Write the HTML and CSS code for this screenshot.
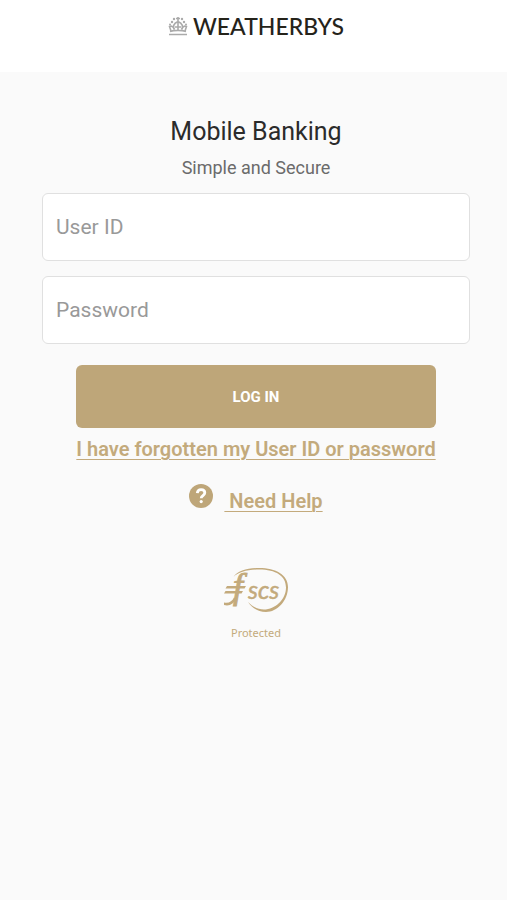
FILE: index.html
```html
<!DOCTYPE html>
<html lang="en">
<head>
  <meta charset="UTF-8" />
  <meta name="viewport" content="width=device-width, initial-scale=1" />
  <title>Weatherbys Mobile Banking</title>
  <link rel="stylesheet" href="styles.css">
</head>
<body>

  <header class="topbar">
    <svg class="crest" viewBox="0 0 20 20" aria-hidden="true">
      <path d="M1 18.500h18M2 15.500c4-1.500 12-1.500 16 0M3 15l-1.500-4.500c2-1 4 0 4.500 2.500M17 15l1.500-4.500c-2-1-4 0-4.500 2.500M10 14V5M6.500 13.500c-2-3-1-6 3.500-8 4.500 2 5.500 5 3.500 8M7 11h6M8 2.500h4M10 1v4" />
      <circle cx="4" cy="6" r="1.200" />
      <circle cx="16" cy="6" r="1.200" />
      <circle cx="6" cy="3" r="1.200" />
      <circle cx="14" cy="3" r="1.200" />
      <circle cx="2" cy="8.500" r="1" />
      <circle cx="18" cy="8.500" r="1" />
    </svg>
    <span class="brand">WEATHERBYS</span>
  </header>

  <main class="login">
    <h1>Mobile Banking</h1>
    <p class="tagline">Simple and Secure</p>

    <form class="login-form">
      <input type="text" id="userId" placeholder="User ID" aria-label="User ID" />
      <input type="password" id="password" placeholder="Password" aria-label="Password" />
      <button type="submit">LOG IN</button>
    </form>

    <a class="link" href="#">I have forgotten my User ID or password</a>

    <div class="help">
      <svg class="help-icon" viewBox="0 0 24 24" aria-hidden="true">
        <circle cx="12" cy="12" r="12" />
        <path d="M8.300 9.200c.2-2.300 1.700-3.500 3.800-3.500 2.200 0 3.700 1.200 3.700 3.100 0 2.700-3.600 2.800-3.600 5.400" />
        <circle class="dot" cx="12.200" cy="17.600" r="1.600" />
      </svg>
      <a class="link" href="#">&nbsp;Need Help</a>
    </div>

    <div class="fscs">
      <svg class="fscs-logo" viewBox="0 0 64 45" role="img" aria-label="FSCS">
        <path d="M9.500 9C13 3 24 0 35 0c17 0 29 7 29 19 0 14-11 25-22 25-8 0-14-4-18-10 5 5 10 7.500 16 7.500 11 0 22-10 22-22C62 8 52 1.500 35 1.500 24 1.500 14 4 9.500 9z" />
        <path d="M3 18h19l-1.500 2.500H1.500zM1.500 23h17.500l-1.500 2.500H0z" />
        <path d="M0 34.500c5 1 8-1 10-5l2 1c-2 5-6 8-12 6.500z" />
        <text class="fscs-f" x="9" y="30">f</text>
        <text class="fscs-scs" x="24" y="31">scs</text>
      </svg>
      <span class="fscs-label">Protected</span>
    </div>
  </main>

</body>
</html>
```

FILE: styles.css
```css
* {
  box-sizing: border-box;
}

body {
  background: #fafafa;
  color: #2b2b2b;
  font-family: Roboto, sans-serif;
  margin: 0;
}

.topbar {
  display: flex;
  justify-content: center;
  align-items: center;
  gap: 5px;
  padding: 14px 0 34px 5px;
  background: #fff;
}

.crest {
  width: 20px;
  height: 20px;
  fill: #aaa;
}

.crest path {
  fill: none;
  stroke: #aaa;
  stroke-width: 1.6;
}

.brand {
  color: #25231a;
  font-family: Lato, sans-serif;
  font-size: 23px;
  font-weight: 500;
  line-height: 24px;
}

.login {
  display: flex;
  flex-direction: column;
  align-items: center;
  padding: 44px 37px 32px 42px;
}

h1 {
  margin: 0;
  font-size: 25px;
  font-weight: 400;
  line-height: 32px;
}

.tagline {
  margin: 8px 0 13px;
  color: #6b6b6b;
  font-size: 18px;
  line-height: 24px;
}

.login-form {
  display: flex;
  flex-direction: column;
  align-items: center;
  width: 100%;
}

.login-form input {
  width: 100%;
  height: 68px;
  margin-bottom: 15px;
  padding: 0 13px;
  border: 1px solid #e0e0e0;
  border-radius: 6px;
  background: #fff;
  color: #2b2b2b;
  font-family: inherit;
  font-size: 21px;
}

.login-form input::placeholder {
  color: #999;
}

.login-form button {
  width: 84%;
  height: 63px;
  margin: 6px 0 7px;
  border: none;
  border-radius: 6px;
  background: #bea679;
  color: #fff;
  font-family: inherit;
  font-size: 15px;
  font-weight: 700;
}

.link {
  color: #c3aa7c;
  font-size: 20px;
  font-weight: 600;
  line-height: 28px;
  text-decoration: underline;
  text-decoration-thickness: 1px;
  text-underline-offset: 3px;
}

.help {
  display: flex;
  align-items: flex-start;
  gap: 11px;
  margin-top: 21px;
}

.help .link {
  padding-top: 3px;
}

.help-icon {
  width: 24px;
  height: 24px;
  fill: #bea679;
}

.help-icon path {
  fill: none;
  stroke: #fff;
  stroke-width: 2.8;
}

.help-icon .dot {
  fill: #fff;
}

.fscs {
  display: flex;
  flex-direction: column;
  align-items: center;
  gap: 12px;
  margin-top: 53px;
  color: #c3aa7c;
}

.fscs-logo {
  width: 64px;
  height: 45px;
  fill: currentColor;
  overflow: visible;
}

.fscs-f {
  font-family: "Liberation Serif", serif;
  font-size: 36px;
  font-style: italic;
  stroke: currentColor;
  stroke-width: 1;
}

.fscs-scs {
  font-family: Lato, sans-serif;
  font-size: 25px;
  font-style: italic;
  stroke: currentColor;
  stroke-width: 0.5;
}

.fscs-label {
  font-family: "Noto Sans", sans-serif;
  font-size: 11px;
  line-height: 16px;
}
```
